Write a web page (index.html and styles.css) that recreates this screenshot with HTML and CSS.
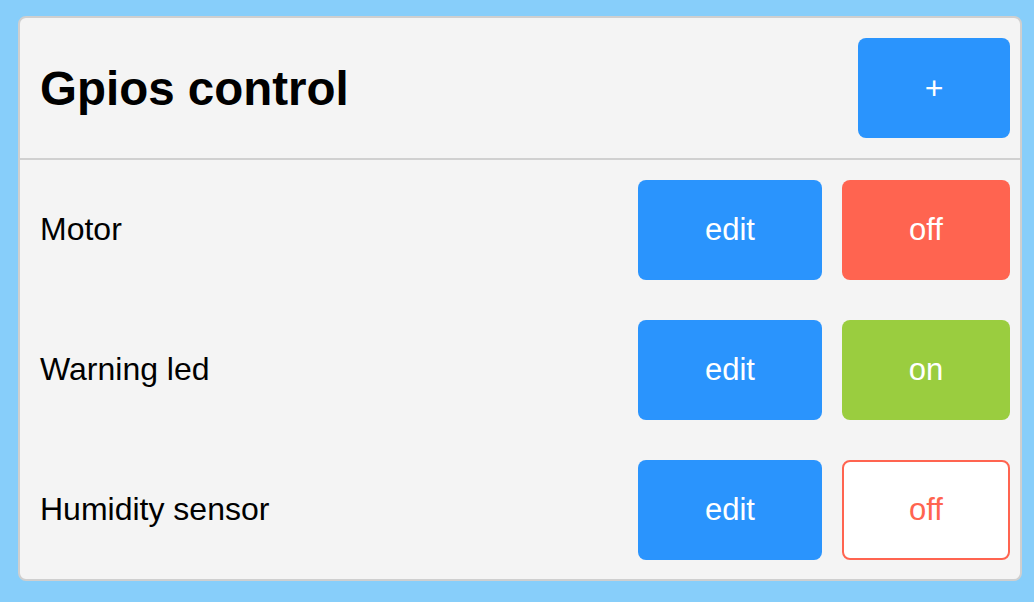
FILE: index.html
```html
<!DOCTYPE html>
<html>
<head>
<meta charset="utf-8">
<link rel="stylesheet" href="styles.css">
</head>
<body>
<div class="card">
  <div class="header">
    <h1 class="title">Gpios control</h1>
    <button class="btn btn-blue btn-add">+</button>
  </div>
  <div class="rows">
    <div class="row">
      <span class="label">Motor</span>
      <button class="btn btn-blue btn-edit">edit</button>
      <button class="btn btn-toggle btn-red">off</button>
    </div>
    <div class="row">
      <span class="label">Warning led</span>
      <button class="btn btn-blue btn-edit">edit</button>
      <button class="btn btn-toggle btn-green">on</button>
    </div>
    <div class="row">
      <span class="label">Humidity sensor</span>
      <button class="btn btn-blue btn-edit">edit</button>
      <button class="btn btn-toggle btn-outline">off</button>
    </div>
  </div>
</div>
</body>
</html>
```

FILE: styles.css
```css
html, body {
  margin: 0;
  padding: 0;
}
body {
  background: #87cefa;
  font-family: "Liberation Sans", Arial, Helvetica, sans-serif;
  padding: 16px 12px 21px 18px;
  height: 602px;
  box-sizing: border-box;
}
.card {
  background: #f4f4f4;
  border: 2px solid #cfcfcf;
  border-radius: 8px;
  height: 565px;
  box-sizing: border-box;
}
.header {
  display: flex;
  align-items: center;
  justify-content: space-between;
  padding: 20px 10px 20px 20px;
  border-bottom: 2px solid #d0d0d0;
}
.title {
  margin: 0;
  font-size: 47.5px;
  font-weight: bold;
  color: #000;
}
.btn {
  font-family: "Liberation Sans", Arial, Helvetica, sans-serif;
  font-size: 31px;
  height: 100px;
  border: none;
  border-radius: 8px;
  color: #fff;
  padding: 0;
  box-sizing: border-box;
}
.btn-blue {
  background: #2a94fd;
}
.btn-add {
  width: 152px;
  font-size: 32px;
}
.rows {
  display: flex;
  flex-direction: column;
  gap: 40px;
  padding: 20px 10px 20px 20px;
}
.row {
  display: flex;
  align-items: center;
  gap: 20px;
}
.label {
  flex: 1;
  font-size: 32px;
  color: #000;
  margin-top: -2px;
}
.btn-edit {
  width: 184px;
}
.btn-toggle {
  width: 168px;
}
.btn-red {
  background: #ff6450;
}
.btn-green {
  background: #9acd3f;
}
.btn-outline {
  background: #fff;
  color: #ff6450;
  border: 2px solid #ff6450;
}
```
